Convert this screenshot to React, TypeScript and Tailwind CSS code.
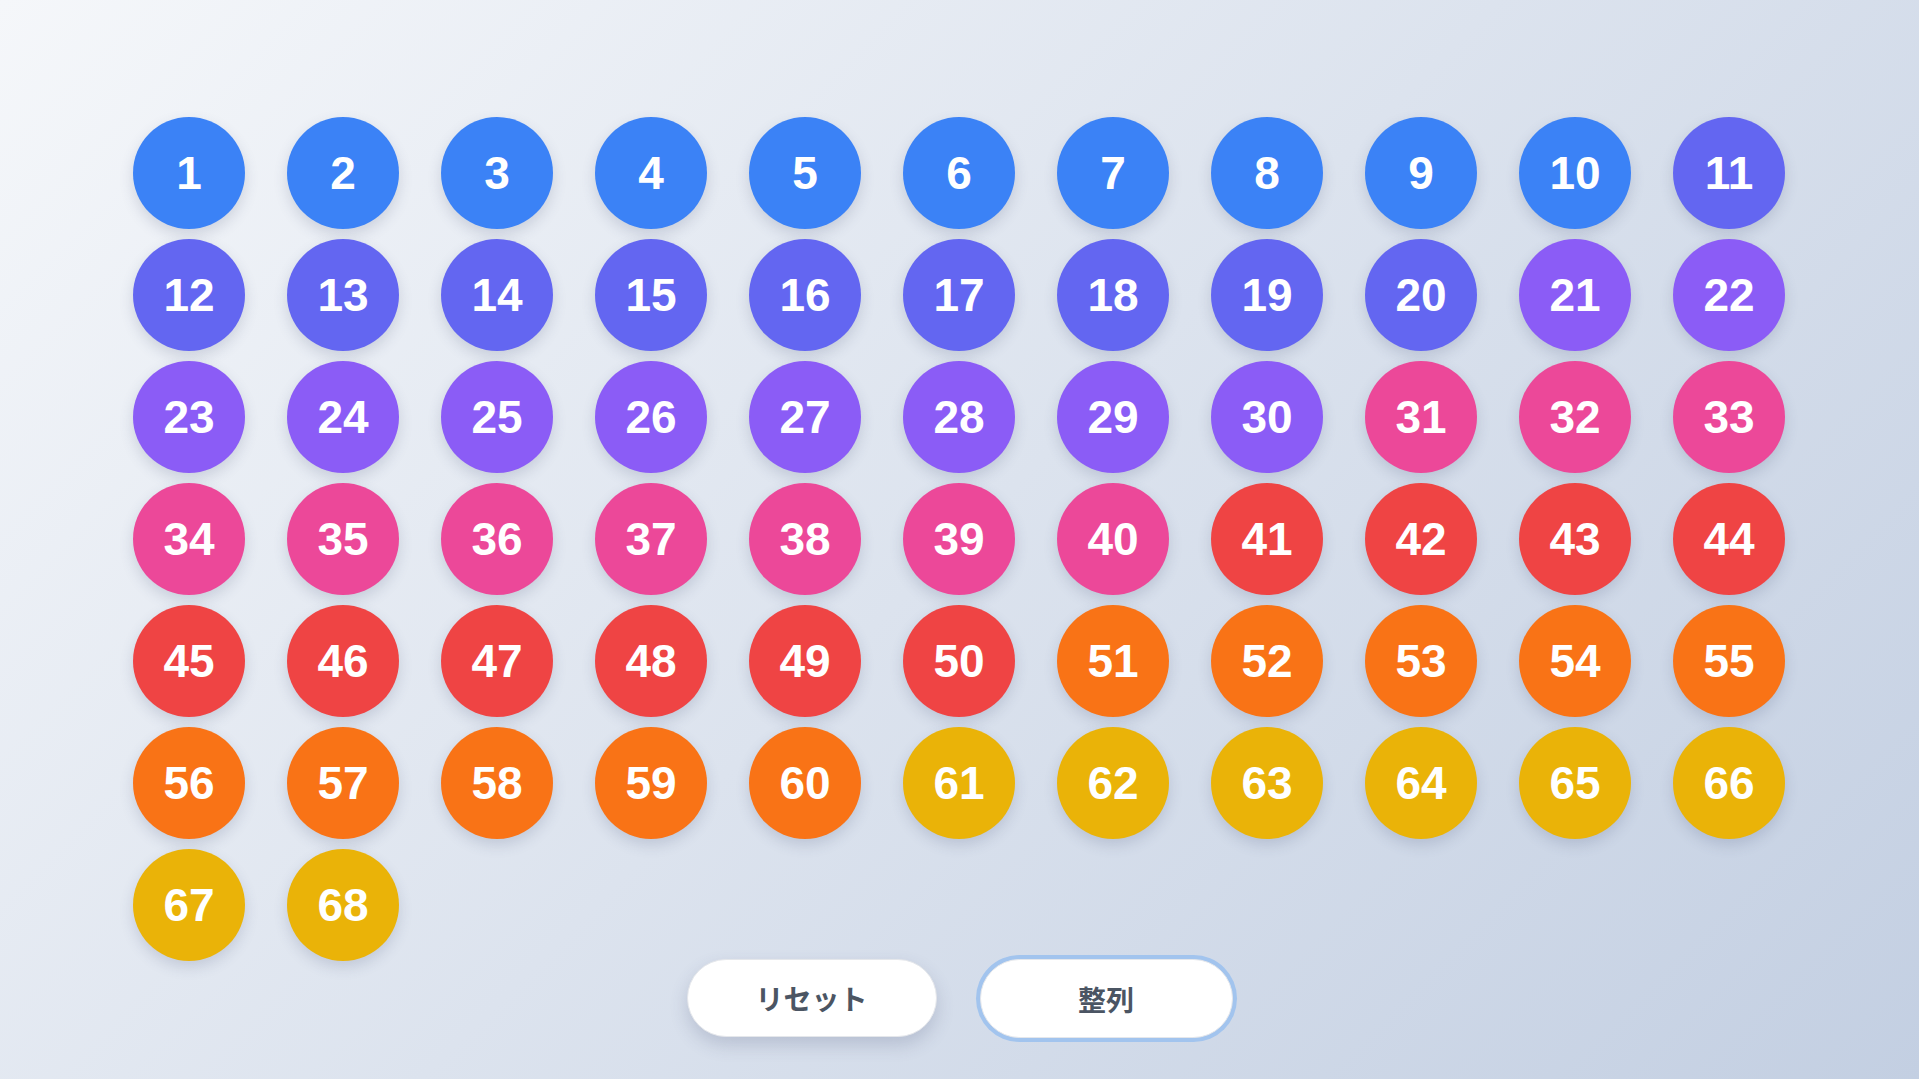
import { useState } from 'react';

// colour per block of ten numbers
const groupColor = (n: number) => {
  if (n <= 10) return 'bg-[#3b82f6]';
  if (n <= 20) return 'bg-[#6366f1]';
  if (n <= 30) return 'bg-[#8b5cf6]';
  if (n <= 40) return 'bg-[#ec4899]';
  if (n <= 50) return 'bg-[#ef4444]';
  if (n <= 60) return 'bg-[#f97316]';
  return 'bg-[#eab308]';
};

const initial = Array.from({ length: 68 }, (_, i) => i + 1);

const App = () => {
  const [balls, setBalls] = useState(initial);

  const reset = () => {
    const next = [...initial];
    for (let i = next.length - 1; i > 0; i--) {
      const j = Math.floor(Math.random() * (i + 1));
      [next[i], next[j]] = [next[j], next[i]];
    }
    setBalls(next);
  };

  const sort = () => setBalls([...balls].sort((a, b) => a - b));

  return (
    <div className="h-screen w-full overflow-hidden flex flex-col bg-[linear-gradient(135deg,#f5f7fa_0%,#c3cfe2_100%)] font-['Liberation_Sans',Arial,sans-serif]">
      {/* Balls */}
      <div className="pt-[117px] px-[133px]">
        <div className="grid grid-cols-[repeat(11,112px)] gap-x-[42px] gap-y-[10px]">
          {balls.map((n) => (
            <div
              key={n}
              className={`${groupColor(n)} w-[112px] h-[112px] rounded-full flex items-center justify-center shadow-[0_6px_14px_rgba(60,70,110,0.18)]`}
            >
              <span className="text-white font-bold text-[46px] leading-none">{n}</span>
            </div>
          ))}
        </div>
      </div>

      {/* Controls */}
      <div className="-mt-[2px] flex justify-center gap-[43px]">
        <button
          onClick={reset}
          className="w-[250px] h-[78px] rounded-full bg-white border border-gray-200 shadow-[0_8px_18px_rgba(60,70,110,0.2)] text-[#4b5563] text-[28px] font-bold font-['Noto_Sans_CJK_JP',sans-serif]"
        >
          リセット
        </button>
        <button
          onClick={sort}
          className="w-[253px] h-[79px] rounded-full bg-white border border-gray-200 ring-[4px] ring-[#a2c4ee] text-[#4b5563] text-[28px] font-bold font-['Noto_Sans_CJK_JP',sans-serif]"
        >
          整列
        </button>
      </div>
    </div>
  );
};

export default App;
